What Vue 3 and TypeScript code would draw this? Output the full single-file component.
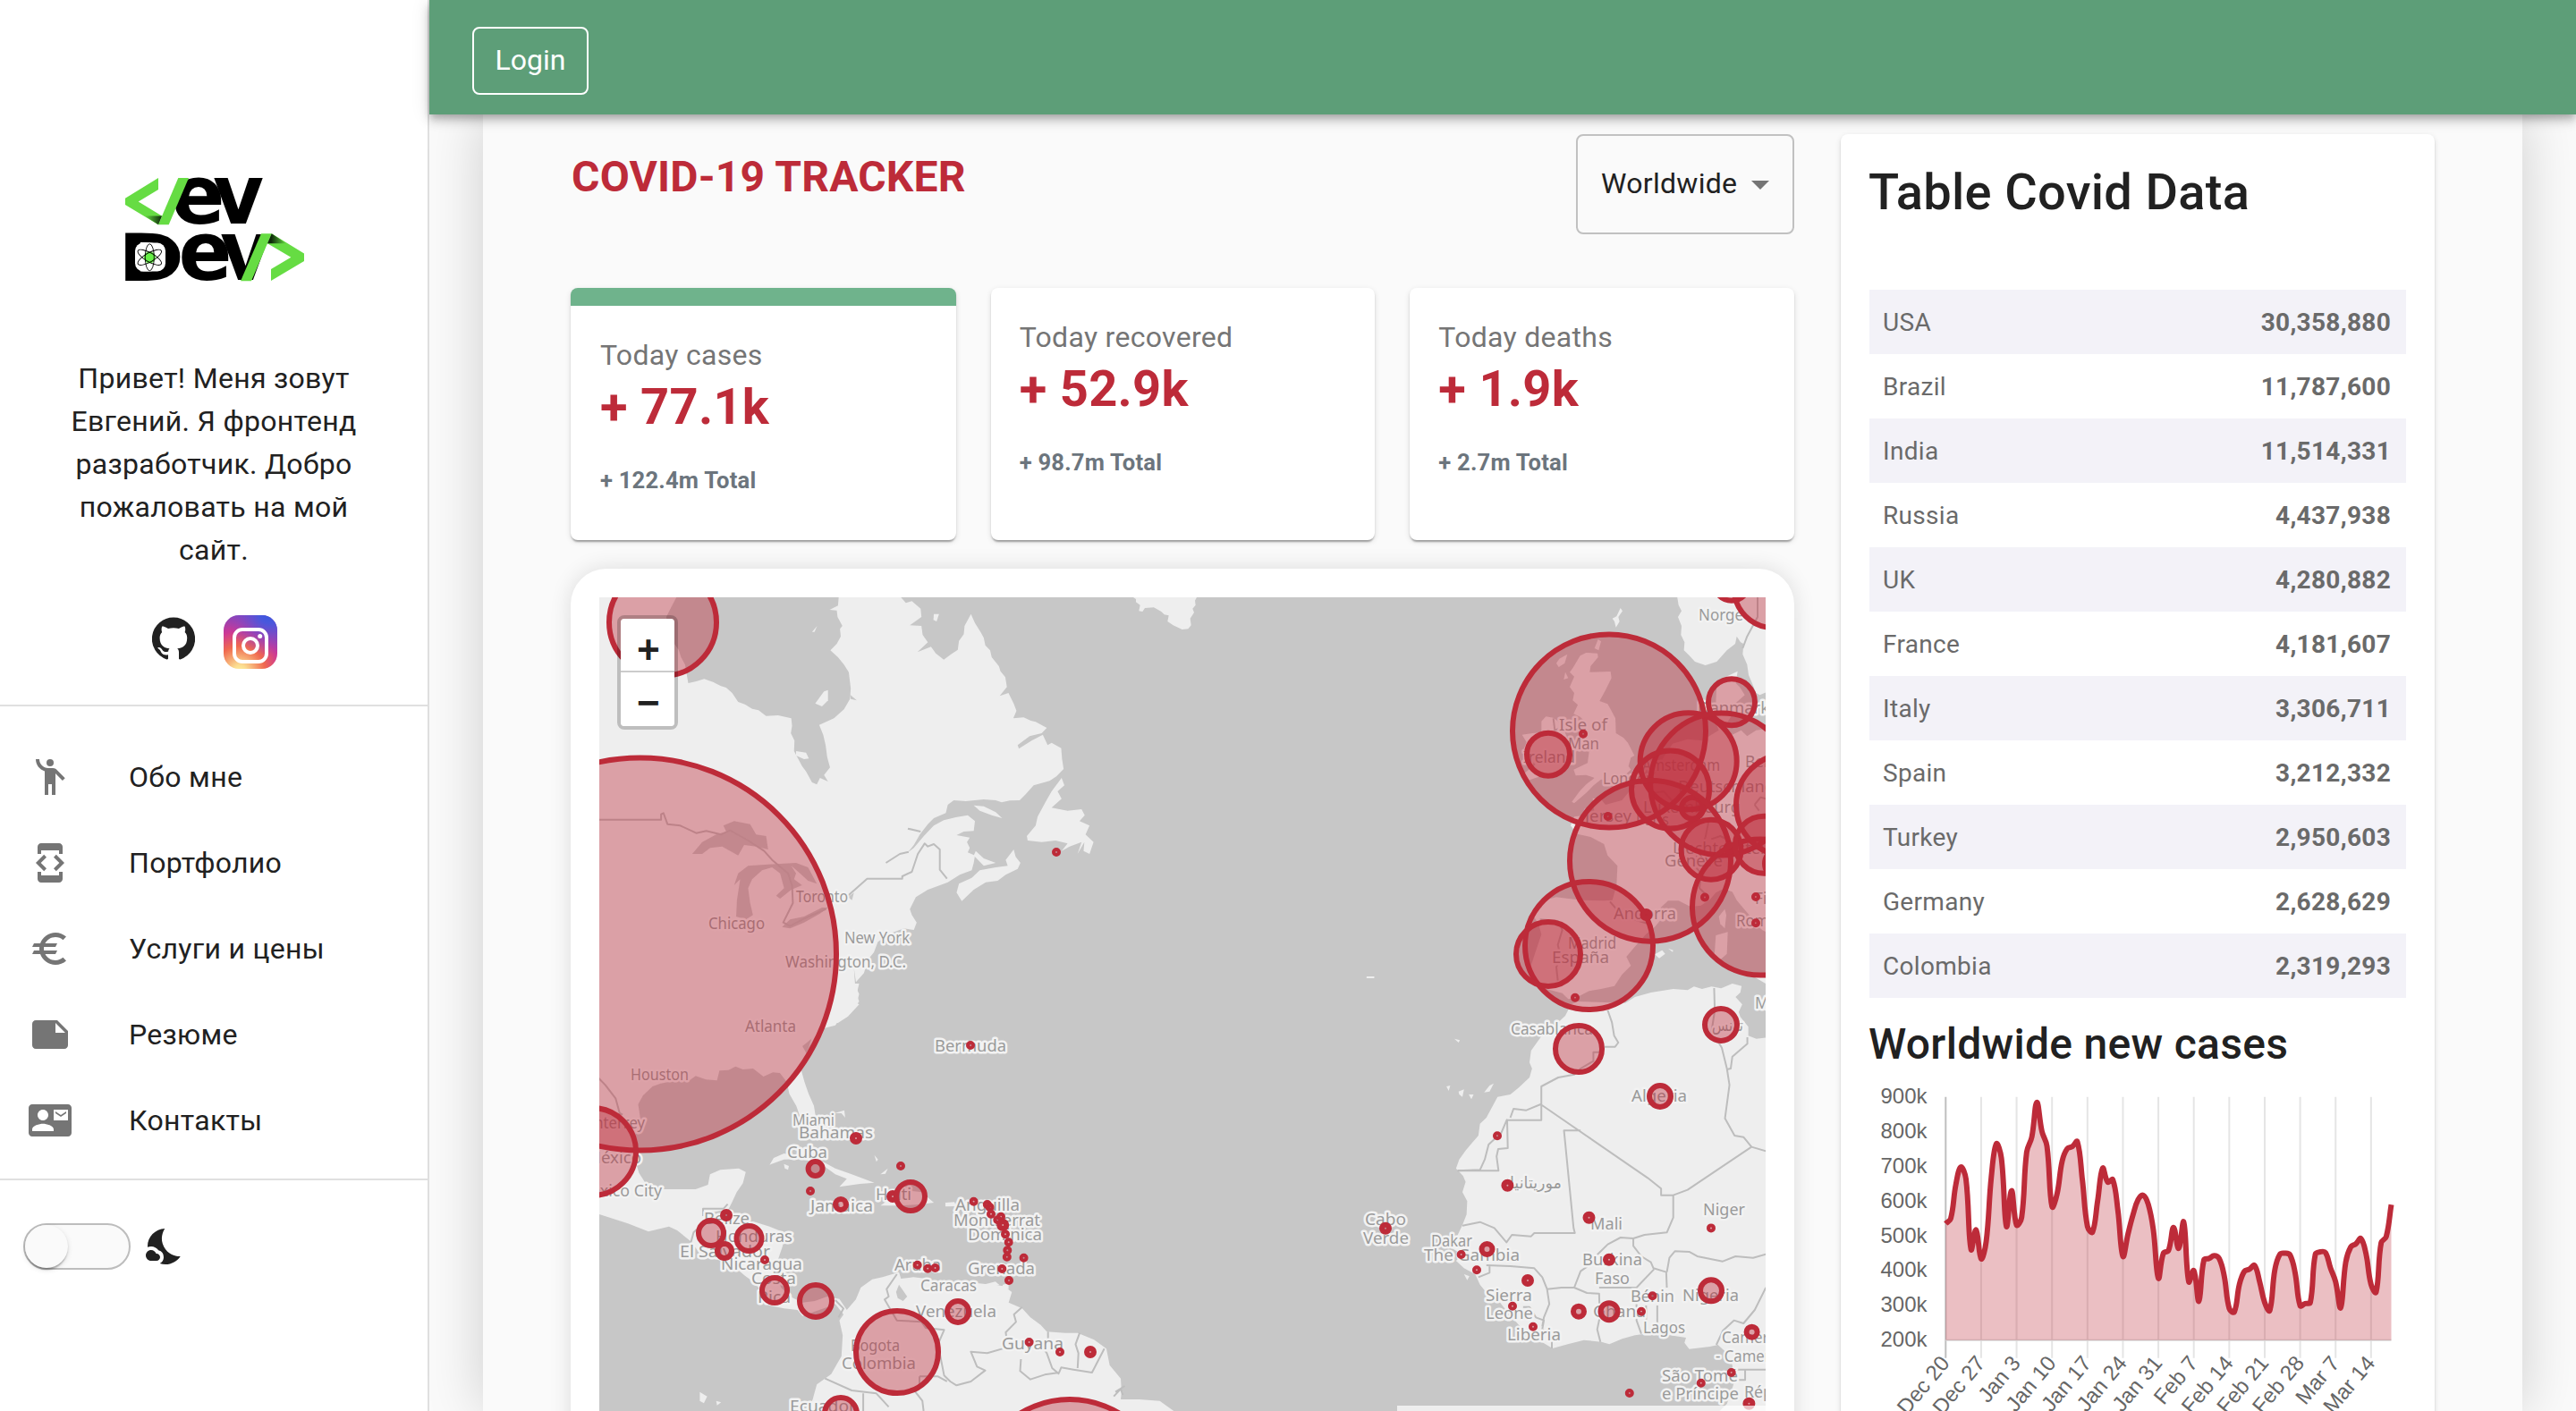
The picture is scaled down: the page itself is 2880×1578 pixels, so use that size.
<script setup lang="ts">
interface NavItem { label: string; paths: string[]; dot?: boolean }
interface Sheet { transform: string; land: string[]; water: string[]; borders: string[] }
type Label = [text: string, left: number, right: number, baseline: number]
type Marker = [x: number, y: number, r: number]

const intro = 'Привет! Меня зовут Евгений. Я фронтенд разработчик. Добро пожаловать на мой сайт.'

const nav: NavItem[] = [
  { label: 'Обо мне', dot: true, paths: ['M15.89 8.11C15.5 7.72 14.83 7 13.53 7h-2.54C8.24 6.99 6 4.75 6 2H4c0 3.16 2.11 5.84 5 6.71V22h2v-6h2v6h2V10.05L18.95 14l1.41-1.41-4.47-4.48z'] },
  { label: 'Портфолио', paths: ['M7 5h10v2h2V3c0-1.1-.9-1.99-2-1.99L7 1c-1.1 0-2 .9-2 2v4h2V5zm8.41 11.59L20 12l-4.59-4.59L14 8.83 17.17 12 14 15.17l1.41 1.42zM10 15.17L6.83 12 10 8.83 8.59 7.41 4 12l4.59 4.59L10 15.17zM17 19H7v-2H5v4c0 1.1.9 2 2 2h10c1.1 0 2-.9 2-2v-4h-2v2z'] },
  { label: 'Услуги и цены', paths: ['M15 18.5c-2.51 0-4.68-1.42-5.76-3.5H15l1-2H8.58c-.05-.33-.08-.66-.08-1s.03-.67.08-1H15l1-2H9.24C10.32 6.92 12.5 5.5 15 5.5c1.61 0 3.09.59 4.23 1.57L21 5.3C19.41 3.87 17.3 3 15 3c-3.92 0-7.24 2.51-8.48 6H3l-1 2h4.06c-.04.33-.06.66-.06 1s.02.67.06 1H3l-1 2h4.52c1.24 3.49 4.56 6 8.48 6 2.31 0 4.41-.87 6-2.3l-1.78-1.77c-1.13.98-2.6 1.57-4.22 1.57z'] },
  { label: 'Резюме', paths: ['M22 10l-6-6H4c-1.1 0-2 .9-2 2v12.01c0 1.1.9 1.99 2 1.99l16-.01c1.1 0 2-.89 2-1.99v-8zm-7-4.5l5.5 5.5H15V5.5z'] },
  { label: 'Контакты', paths: ['M21 8V7l-3 2-3-2v1l3 2 3-2zm1-5H2C.9 3 0 3.9 0 5v14c0 1.1.9 2 2 2h20c1.1 0 1.99-.9 1.99-2L24 5c0-1.1-.9-2-2-2zM8 6c1.66 0 3 1.34 3 3s-1.34 3-3 3-3-1.34-3-3 1.34-3 3-3zm6 12H2v-1c0-2 4-3.1 6-3.1s6 1.1 6 3.1v1zm8-6h-8V6h8v6z'] },
]

const stats = [
  { title: 'Today cases', value: '+ 77.1k', total: '+ 122.4m Total', active: true },
  { title: 'Today recovered', value: '+ 52.9k', total: '+ 98.7m Total', active: false },
  { title: 'Today deaths', value: '+ 1.9k', total: '+ 2.7m Total', active: false },
]

const table: [string, string][] = [
  ['USA', '30,358,880'], ['Brazil', '11,787,600'], ['India', '11,514,331'], ['Russia', '4,437,938'],
  ['UK', '4,280,882'], ['France', '4,181,607'], ['Italy', '3,306,711'], ['Spain', '3,212,332'],
  ['Turkey', '2,950,603'], ['Germany', '2,628,629'], ['Colombia', '2,319,293'],
]

/* ---- map ---- */
const sheets: Sheet[] = [
  {
    transform: 'translate(640 640) scale(.44643 .33333)',
    land: [
      'M60 80L262 80 250 110 235 150 240 185 250 230 266 260 272 285 282 310 290 372 310 366 330 358 352 368 372 382 385 387 400 405 415 435 432 443 450 458 466 463 485 482 515 480 548 490 550 515 547 540 556 565 555 600 575 650 585 668 600 705 612 712 620 690 640 702 630 680 645 655 638 620 634 580 628 545 618 512 655 490 680 460 695 425 697 390 692 335 680 310 665 285 646 262 662 240 672 215 670 190 676 180 664 150 662 128 644 126 665 112 667 80 820 80 835 103 850 97 872 122 874 150 845 178 874 180 877 210 890 235 864 268 898 250 910 272 930 293 948 275 965 260 968 230 980 208 982 180 998 140 1008 170 1022 200 1030 220 1034 245 1046 262 1050 285 1068 315 1072 332 1084 352 1088 385 1070 415 1092 405 1105 440 1112 465 1104 490 1130 487 1148 498 1160 502 1188 522 1175 540 1145 550 1115 580 1118 592 1150 565 1178 545 1190 580 1200 572 1224 590 1226 625 1230 660 1212 685 1195 700 1155 715 1135 745 1120 765 1095 766 1075 772 1060 765 1030 762 985 768 955 765 940 780 935 808 905 825 890 845 870 880 855 915 840 940 855 925 880 885 905 850 930 832 960 822 990 815 1008 835 1005 868 980 870 962 882 995 890 988 905 995 925 990 940 1008 950 1005 975 1000 1000 970 1015 940 1040 925 1048 890 1065 860 1090 845 1130 850 1150 862 1175 855 1200 830 1195 800 1210 765 1240 755 1275 740 1300 730 1345 710 1375 705 1330 708 1385 718 1415 712 1445 718 1450 690 1490 665 1512 60 1512z',
      'M1010 935L1030 960 1060 975 1030 985 1005 950z',
      'M1105 930L1110 955 1122 975 1115 995 1085 1015 1065 1035 1035 1040 1005 1065 975 1103 962 1075 968 1045 1000 1025 1020 1000 1060 990 1090 985 1085 965z',
      'M1005 782L1030 785 1060 805 1076 825 1050 815 1020 800z',
      'M1225 690L1232 715 1215 735 1225 760 1200 790 1240 800 1275 795 1283 815 1270 835 1295 850 1285 880 1305 905 1295 945 1280 935 1282 905 1265 945 1275 905 1245 920 1225 935 1240 910 1210 900 1175 905 1140 900 1138 885 1160 850 1165 820 1185 770 1200 735z',
      'M560 600L585 605 592 625 580 627 560 615z',
      'M630 400L640 395 640 430 625 450 608 440z',
      'M905 140L918 140 912 165 904 160z',
      'M600 200L613 180 606 200z',
    ],
    water: [
      'M300 945L325 905 360 880 385 870 378 850 405 835 445 845 460 880 485 885 490 930 460 920 430 915 415 950 395 935 375 920 345 925 325 945z',
      'M405 1050L415 1010 440 985 490 980 560 975 590 990 612 1045 590 1035 570 1010 548 985 560 1010 555 1030 575 1050 548 1065 520 1095 510 1085 530 1060 520 1010 500 990 475 1000 450 1030 440 1060 445 1110 452 1150 435 1165 410 1155 412 1100 420 1030z',
      'M525 1190L545 1165 580 1155 625 1125 640 1125 620 1145 580 1175 545 1195z',
      'M690 1090L705 1075 700 1100z',
      'M695 410L712 430 697 425z',
    ],
    borders: ['M60 830H222V812L228 808 238 845 270 850 310 875 335 868 372 880 395 866 440 900 480 935 500 965 540 1010 550 1050 552 1110 528 1175 545 1187 580 1162 635 1130', 'M690 1085L738 1028H826V1020L850 1005 865 945 882 910 890 920 905 912 920 930V998L938 1028', 'M785 975L820 945 842 938M840 860L872 870'],
  },
  {
    transform: 'translate(640 1100) scale(.45918 .33333)',
    land: [
      'M60 0L698 0 692 35 698 60 685 85 670 110 650 120 640 140 612 150 590 180 575 215 565 255 557 290 565 330 575 370 588 410 592 445 580 475 555 450 545 410 528 370 522 330 505 300 488 298 465 312 440 285 415 288 397 278 380 290 358 292 352 325 325 322 300 310 285 325 255 325 215 335 195 345 172 375 160 405 165 450 152 510 148 570 162 635 178 670 205 690 250 690 300 690 330 675 335 640 360 625 405 620 422 632 415 670 400 700 388 735 375 770 365 795 400 800 440 798 480 815 515 835 512 880 502 920 495 970 508 1020 530 1050 560 1070 590 1065 620 1050 650 1058 668 1095 690 1060 702 1020 730 992 755 985 795 968 800 990 830 985 862 990 885 1005 930 1010 985 1005 1020 1010 1050 1015 1070 1035 1062 1070 1095 1090 1115 1120 1140 1145 1155 1168 1200 1172 1230 1172 1270 1195 1300 1225 1308 1280 1335 1325 1337 1370 1335 1395 1380 1395 1430 1400 1470 1440 570 1440 585 1395 595 1345 630 1310 655 1250 658 1180 650 1130 660 1110 640 1075 615 1088 590 1100 560 1115 548 1095 515 1090 480 1080 460 1050 450 1010 420 980 390 945 350 925 310 905 288 865 255 828 235 815 185 832 135 805 60 772z',
      'M480 608L490 585 515 570 550 578 600 590 640 620 680 640 735 668 700 672 650 682 668 655 640 640 610 610 560 588 515 590 485 605z',
      'M740 700L790 690 850 700 880 735 850 740 800 745 750 745 770 725z', 'M908 735L930 733 935 747 908 748z', 'M585 735L620 738 650 755 610 755z',
      'M515 605L527 612 525 625 517 620z', 'M1000 1010L1030 1000 1040 1012 1010 1020z', 'M1048 1010L1062 1005 1062 1025 1045 1025z',
      'M310 1370L328 1385 320 1408 310 1400z', 'M350 1400L362 1405 352 1415z', 'M750 640L768 620 762 638z', 'M638 435L662 425 664 450 655 435z', 'M735 575L744 590 740 598z',
    ],
    water: ['M795 1010L805 1030 815 1050 805 1065 792 1055 788 1035z', 'M338 768L385 755 378 768 345 780z', 'M560 210L582 185 570 235z'],
    borders: ['M60 312L80 340 105 385 115 435 122 440', 'M318 780V755H368L378 740M288 870L295 835 310 815', 'M790 975L765 1025 770 1050 760 1060 790 1130 850 1135 860 1155 905 1162 890 1210 900 1280 905 1315 920 1335 935 1348 970 1335 1005 1298 985 1285 970 1235 1010 1240 1060 1220 1055 1170 1080 1135 1075 1110 1095 1085', 'M845 1318H890L912 1335M845 1318V1350L835 1370 852 1400 855 1434', 'M615 1325L680 1365 740 1375 770 1420M708 1375V1434', 'M1158 1168V1200L1145 1220 1155 1240 1168 1290 1185 1310M1235 1172L1225 1210 1232 1240 1230 1290M1092 1260L1090 1300 1115 1328 1150 1312 1185 1305 1190 1288 1220 1295 1265 1305 1295 1225', 'M640 1062L660 1090 648 1120', 'M1322 1370L1345 1350M1318 1385L1335 1360 1340 1380'],
  },
  {
    transform: 'translate(1560 640) scale(.33333)',
    land: [
      'M945 80L950 110 960 130 948 150 960 180 958 210 970 235 968 262 985 278 1005 300 1040 312 1078 300 1100 275 1112 262 1140 240 1145 215 1158 235 1168 240 1165 275 1180 310 1185 345 1200 380 1210 405 1222 412 1250 400 1250 80z',
      'M755 120L762 130 748 150 752 165 740 185 735 165 728 155 742 148z', 'M680 225L690 232 682 262 668 255z',
      'M620 280L640 270 678 272 680 285 655 315 652 335 722 333 725 355 705 395 685 432 712 442 725 465 738 490 740 540 765 555 780 572 802 615 790 622 782 650 790 662 760 690 720 700 690 695 665 715 640 740 600 775 592 770 618 735 640 712 668 690 640 680 605 682 598 662 645 640 650 600 645 588 620 582 640 545 640 505 620 485 598 475 612 445 595 430 600 405 585 385 600 350 585 335 595 322z',
      'M550 290L577 275 568 305 548 318 540 305z', 'M570 335L580 355 565 360z',
      'M490 500L505 484 530 488 552 505 570 540 590 585 588 630 575 655 545 668 500 680 450 697 425 680 470 645 428 600 440 570 425 545 460 540 490 538z',
      'M1078 375L1110 350 1148 332 1142 372 1155 385 1172 412 1140 440 1128 480 1110 510 1105 535 1130 545 1160 530 1180 550 1210 530 1250 525 1250 1210 1230 1200 1200 1165 1170 1130 1145 1100 1130 1072 1100 1062 1075 1075 1055 1098 1025 1118 990 1122 950 1102 915 1102 890 1125 895 1160 870 1190 840 1215 800 1260 775 1290 790 1320 760 1350 735 1388 690 1398 650 1405 605 1428 580 1432 560 1412 520 1402 465 1385 450 1335 468 1280 490 1215 480 1180 455 1140 490 1125 500 1100 540 1090 580 1095 630 1100 700 1102 728 1100 742 1050 745 985 712 950 700 912 655 888 610 878 588 850 600 820 640 815 672 822 665 790 662 758 690 762 705 780 760 765 785 735 830 700 850 695 880 665 900 620 930 575 980 560 1030 565 1060 545 1085 530 1065 480 1075 440z',
      'M1105 1130L1110 1150 1105 1195 1090 1180 1085 1155z', 'M1075 1218L1115 1207 1112 1280 1090 1300 1070 1290z', 'M870 1282L895 1268 905 1280 885 1295z', 'M915 1262L932 1268 930 1274z', 'M1205 1358L1250 1360 1250 1385z',
    ],
    water: [],
    borders: ['M1215 84V150L1180 215 1165 255', 'M720 1105L750 1140 800 1165 850 1180', 'M485 1165L545 1170 560 1200 545 1250 555 1290 540 1325 545 1370', 'M530 490L535 530 560 520', 'M830 700L870 740 900 735 950 790 1000 800 1050 840 1040 890', 'M1040 890L1020 930 1000 980 1025 1010 1020 1060 1040 1080M1060 895L1090 885 1120 900 1180 940 1242 950M1205 780L1225 755 1242 760M1205 780L1220 800'],
  },
  {
    transform: 'translate(1460 1080) scale(.35714 .33333)',
    land: [
      'M830 130L850 120 1000 125 1030 105 1080 90 1150 78 1195 82 1215 70 1240 78 1270 70 1300 76 1335 60 1364 68 1360 90 1345 105 1366 130 1355 155 1360 172 1385 205 1385 235 1410 245 1450 240 1450 1500 1290 1500 1318 1470 1328 1440 1340 1400 1335 1340 1318 1300 1290 1272 1265 1278 1200 1286 1185 1265 1190 1248 1140 1240 1080 1232 1030 1240 990 1252 950 1270 925 1262 870 1256 820 1270 772 1284 720 1250 670 1210 630 1160 600 1120 575 1110 545 1070 530 1035 495 1015 470 990 490 970 445 940 470 915 490 870 503 835 505 790 490 760 500 725 492 705 470 680 480 650 500 620 520 595 540 570 545 530 565 510 580 480 600 440 640 432 665 410 700 375 708 345 700 325 705 285 725 255 745 225 790 190 812 168z',
      'M440 405L452 402 447 420z', 'M478 422L495 415 490 440 480 432z', 'M510 432L525 432 518 448z', 'M558 425L575 402 588 395 575 422z', 'M465 245L482 250 478 258z', 'M190 36H214V42H190z', 'M495 1035L512 1042 505 1055z',
    ],
    water: [],
    borders: [
      'M945 150L958 190 965 235 978 258 968 272H935M920 290H900V320L860 345 840 365 790 375 737 405V518H630L632 612 602 615 597 640 603 688H475M640 510L650 480 690 485 735 465M735 465L1070 712 1112 748V770H1150L1195 752 1395 608 1440 622M860 553H808L838 880 842 897H715L705 908 645 903 628 928 590 880 545 860 490 872',
      'M630 515L612 560 572 600 560 650 545 685 475 688',
      'M1278 75L1280 150 1270 220 1302 275 1318 345 1326 400 1312 512 1342 570 1370 575 1395 608M1382 240V262L1335 305 1330 345 1318 348M1150 770V845L1130 895 1060 903 1025 915 985 912 945 935 912 970M1025 915V940L1050 975 1080 995 1088 1015 1128 1028 1130 1080M1130 1028L1138 980 1155 958 1200 960 1225 975 1305 992 1345 975 1400 980 1440 968',
      'M565 1005L640 1008 715 1015 740 1045 755 1085 800 1080 840 1080 860 1025 880 1010M755 1085L762 1135 745 1180 740 1210M840 1080L880 1098 918 1100 920 1180 912 1220 922 1262M918 1080H1035L1090 1018M1035 1080V1190L1050 1235M1100 1140V1200M1065 1140V1190M575 1005V1030L540 1045M680 1145L700 1145 720 1180 745 1190 740 1220 770 1245V1284',
      'M1440 1080L1405 1155 1370 1200 1340 1190 1305 1225 1285 1272M1345 1355H1440M1375 1355V1390H1345',
    ],
  },
  {
    transform: 'translate(1240 660) scale(.33333)',
    land: ['M75 20L90 30 90 40 104 50 100 70 112 72 120 60 150 58 175 72 185 82 200 85 196 105 215 118 245 132 265 130 275 118 272 95 285 75 280 62 290 50 288 35 296 20z'],
    water: [],
    borders: [],
  },
]

const labels: Label[] = [
  ['Toronto', 890, 948, 1009], ['Chicago', 792, 855, 1039], ['New York', 944, 1017, 1055], ['Washington, D.C.', 878, 1013, 1082],
  ['Atlanta', 833, 890, 1154], ['Houston', 705, 770, 1208], ['Bermuda', 1045, 1125, 1176], ['Miami', 886, 933, 1259],
  ['Bahamas', 893, 976, 1273], ['Cuba', 880, 925, 1295], ['Haiti', 979, 1019, 1342], ['Jamaica', 906, 976, 1355],
  ['Belize', 787, 838, 1369], ['Honduras', 800, 886, 1389], ['El Salvador', 760, 861, 1406], ['Nicaragua', 806, 897, 1420],
  ['Costa', 840, 890, 1436], ['Rica', 847, 884, 1457], ['Aruba', 1000, 1052, 1421], ['Grenada', 1082, 1157, 1425],
  ['Anguilla', 1068, 1140, 1354], ['Montserrat', 1066, 1163, 1371], ['Dominica', 1082, 1165, 1387], ['Caracas', 1029, 1092, 1444],
  ['Venezuela', 1024, 1114, 1473], ['Bogota', 951, 1006, 1511], ['Colombia', 941, 1024, 1531], ['Guyana', 1120, 1189, 1509],
  ['Ecuador', 883, 957, 1579], ['Monterrey', 639, 721, 1262], ['México', 655, 717, 1301], ['Mexico City', 645, 740, 1338],
  ['Norge', 1899, 1949, 694], ['Isle of', 1743, 1797, 817], ['Man', 1753, 1788, 838], ['Ireland', 1703, 1761, 853],
  ['London', 1792, 1850, 877], ['Amsterdam', 1836, 1923, 862], ['Danmark', 1898, 1978, 798], ['Berlin', 1951, 1999, 858],
  ['Deutschland', 1876, 1984, 886], ['Luxembourg', 1837, 1946, 909], ['Jersey', 1772, 1824, 919], ['Paris', 1829, 1866, 923],
  ['Liechtenstein', 1870, 1984, 955], ['Genève', 1861, 1926, 969], ['Andorra', 1804, 1874, 1028], ['Madrid', 1753, 1807, 1061],
  ['España', 1735, 1799, 1077], ['Roma', 1941, 1987, 1036], ['Firenze', 1962, 2020, 1011], ['Malta', 1962, 2008, 1128],
  ['Casablanca', 1689, 1781, 1157], ['تونس', 1914, 1949, 1153], ['Algeria', 1824, 1886, 1232], ['موريتانيا', 1688, 1746, 1329],
  ['Mali', 1778, 1814, 1375], ['Niger', 1904, 1951, 1359], ['Cabo', 1526, 1572, 1370], ['Verde', 1524, 1575, 1391],
  ['Dakar', 1600, 1646, 1394], ['The Gambia', 1592, 1699, 1410], ['Burkina', 1769, 1836, 1415], ['Faso', 1783, 1822, 1436],
  ['Sierra', 1661, 1713, 1455], ['Leone', 1661, 1714, 1475], ['Liberia', 1685, 1745, 1499], ['Bénin', 1823, 1872, 1456],
  ['Nigeria', 1881, 1944, 1455], ['Ghana', 1781, 1840, 1473], ['Lagos', 1837, 1884, 1491], ['Cameroon', 1925, 2008, 1502],
  ['- Cameroun', 1918, 2010, 1523], ['São Tomé', 1858, 1943, 1545], ['e Príncipe', 1858, 1944, 1565], ['République', 1950, 2045, 1563],
]

const markers: Marker[] = [
  [741, 696, 60], [715.5, 1067, 219.5], [1181, 953, 2], [662, 1288, 49], [957, 1273, 4], [911.6, 1307, 8], [906, 1332, 2],
  [940, 1347, 6], [1007, 1304, 2], [998, 1338, 4], [1018, 1338, 16], [812, 1359, 4], [795, 1379, 14], [837.5, 1385, 14],
  [810, 1399, 8], [855, 1409, 2], [866, 1443, 14], [912, 1455, 18], [1003, 1512, 46], [940, 1581, 18], [1071, 1467, 12],
  [1196, 1671, 106], [1150.6, 1501, 2], [1185, 1512, 2], [1219, 1512, 4],
  [1088.6, 1343.7, 2], [1103.8, 1347, 2], [1106.5, 1350, 2], [1108, 1357.7, 2], [1119, 1360.7, 2], [1115.3, 1364.3, 2], [1121.2, 1370, 4],
  [1124, 1380.3, 2], [1127.7, 1389.3, 2], [1126.3, 1398.3, 2], [1125.8, 1405.7, 2], [1144.6, 1406.7, 2], [1120.3, 1419, 2],
  [1128, 1432, 2], [1025.7, 1414.7, 2], [1037.2, 1418.7, 2], [1045.5, 1418, 2], [1085, 1169, 2],
  [1799, 817.5, 108], [1770, 820.7, 2], [1731, 843.7, 24], [1797.7, 913, 2], [1936, 785.3, 26], [1887.7, 851.3, 54],
  [1924.7, 877, 79.5], [1867.5, 883, 43.5], [1892, 903.7, 12], [1845, 962.7, 90], [1913, 950.3, 33.5], [1933.5, 948.5, 4],
  [1776.5, 1057.5, 71.5], [1731, 1067, 36], [1761, 1115.7, 2], [1840.4, 1023, 4], [1906, 1003.5, 2], [1963, 1003, 2], [1963, 1032.3, 2],
  [1968, 1014.6, 76], [1998, 900.3, 57], [1972, 944.7, 32], [1990, 966, 17], [1936, 651.7, 20], [1982.7, 658, 44],
  [1765, 1173, 26], [1924, 1146, 18], [1856, 1226, 12], [1674, 1270.3, 2], [1685.4, 1325.7, 4], [1776.5, 1361.7, 4], [1913, 1373.4, 2],
  [1549, 1373.7, 4], [1662.5, 1397, 6], [1633.6, 1403, 2], [1651, 1420.3, 2], [1708, 1432, 4], [1691, 1460.7, 2], [1714, 1483.7, 2],
  [1799, 1408.7, 4], [1765, 1466.7, 6], [1799, 1466.7, 9.5], [1847.5, 1449.3, 2], [1835, 1466.7, 2], [1913, 1443.3, 12],
  [1958.6, 1489.7, 6], [1935.7, 1535, 2], [1901.8, 1546.7, 2], [1821.8, 1558, 2], [1955.4, 1569.7, 4],
]

/* ---- chart: daily new cases, thousands ---- */
const daily = [
  535, 550, 647, 698, 664, 461, 517, 434, 484, 668, 765, 724, 527, 630, 531, 553, 741, 784, 884, 801, 758, 584, 621, 715, 751, 757,
  771, 660, 527, 511, 600, 695, 655, 662, 574, 441, 505, 561, 604, 617, 591, 518, 378, 450, 458, 524, 464, 540, 368, 400, 312, 431,
  435, 443, 435, 385, 291, 281, 360, 398, 404, 415, 368, 308, 285, 402, 447, 450, 445, 394, 299, 305, 308, 447, 454, 452, 407, 368,
  293, 424, 468, 477, 492, 449, 360, 338, 480, 498, 590,
]
const left = 2175.3
const right = 2673.5
const top = 1226.7
const bottom = 1498.7
const step = (right - left) / (daily.length - 1)
const px = (i: number) => left + i * step
const py = (v: number) => bottom - ((v - 200) / 700) * (bottom - top)

/* Cardinal spline with tension .4, control points scaled by neighbour distance */
function spline(values: number[]): string {
  const pts = values.map((v, i) => ({ x: px(i), y: py(v) }))
  const ctrl = pts.map((p, i) => {
    const a = pts[Math.max(0, i - 1)]
    const b = pts[Math.min(pts.length - 1, i + 1)]
    const d1 = Math.hypot(p.x - a.x, p.y - a.y)
    const d2 = Math.hypot(b.x - p.x, b.y - p.y)
    const f1 = (0.4 * d1) / (d1 + d2)
    const f2 = (0.4 * d2) / (d1 + d2)
    return { ax: p.x - f1 * (b.x - a.x), ay: p.y - f1 * (b.y - a.y), bx: p.x + f2 * (b.x - a.x), by: p.y + f2 * (b.y - a.y) }
  })
  let d = `M${pts[0].x} ${pts[0].y}`
  for (let i = 1; i < pts.length; i++) {
    d += `C${ctrl[i - 1].bx} ${ctrl[i - 1].by} ${ctrl[i].ax} ${ctrl[i].ay} ${pts[i].x} ${pts[i].y}`
  }
  return d
}
const line = spline(daily)
const area = `${line}L${right} ${bottom}L${left} ${bottom}Z`
const weeks = ['Dec 20', 'Dec 27', 'Jan 3', 'Jan 10', 'Jan 17', 'Jan 24', 'Jan 31', 'Feb 7', 'Feb 14', 'Feb 21', 'Feb 28', 'Mar 7', 'Mar 14']
const levels = [900, 800, 700, 600, 500, 400, 300, 200]
</script>

<template>
  <div class="page">
    <aside class="sidebar">
      <svg class="logo" viewBox="0 0 200 116">
        <defs>
          <linearGradient id="foldA" x1="0" x2="1"><stop offset="0" stop-color="#66dc43" /><stop offset="1" stop-color="#0d2a08" /></linearGradient>
          <linearGradient id="foldB" x1="0" x2="1"><stop offset="0.2" stop-color="#0d2a08" /><stop offset="1" stop-color="#66dc43" /></linearGradient>
        </defs>
        <g class="logo-word">
          <text x="51.5" y="51" font-size="90" textLength="60" lengthAdjust="spacingAndGlyphs">e</text>
          <text x="98" y="51" font-size="93" textLength="57" lengthAdjust="spacingAndGlyphs">v</text>
          <text x="-8" y="115.3" font-size="72.5" textLength="74" lengthAdjust="spacingAndGlyphs">D</text>
          <text x="59.5" y="114.3" font-size="90" textLength="60" lengthAdjust="spacingAndGlyphs">e</text>
          <text x="106" y="114.3" font-size="93" textLength="57" lengthAdjust="spacingAndGlyphs">v</text>
        </g>
        <g fill="#66dc43">
          <path d="M37 0L0 22.7V30L37 52.2 41 42.5 14.7 26.5 37 13z" />
          <path d="M59.3 0H71L48.7 52.2H37z" />
          <path d="M152 62.3H163.7L141 115.3H129z" />
          <path d="M163.7 62.3L200 84.6V93L163 115V101.9L185.3 88.8 159 73.2z" />
        </g>
        <path d="M22 42.5H41L37 52.2z" fill="url(#foldA)" />
        <path d="M163.7 62.3L180 73.2H159z" fill="url(#foldB)" />
        <rect x="11" y="72.5" width="34" height="32" rx="9" fill="#fff" />
        <circle cx="27.3" cy="88.8" r="6.6" fill="#66f046" />
        <g fill="none" stroke="#000" stroke-width=".9">
          <ellipse cx="27.3" cy="88.8" rx="5" ry="15" />
          <ellipse cx="27.3" cy="88.8" rx="5" ry="15" transform="rotate(60 27.3 88.8)" />
          <ellipse cx="27.3" cy="88.8" rx="5" ry="15" transform="rotate(-60 27.3 88.8)" />
        </g>
      </svg>
      <p class="intro">{{ intro }}</p>
      <div class="social">
        <svg class="github" viewBox="0 0 24 24"><path d="M12 .3a12 12 0 0 0-3.8 23.4c.6.1.8-.3.8-.6v-2c-3.3.7-4-1.6-4-1.6-.6-1.4-1.4-1.8-1.4-1.8-1-.7.1-.7.1-.7 1.2 0 1.9 1.2 1.9 1.2 1 1.8 2.8 1.3 3.5 1 0-.8.4-1.3.7-1.6-2.7-.3-5.5-1.3-5.5-6 0-1.2.5-2.3 1.3-3.1-.2-.4-.6-1.6 0-3.2 0 0 1-.3 3.4 1.2a11.5 11.5 0 0 1 6 0c2.3-1.5 3.3-1.2 3.3-1.2.6 1.6.2 2.8 0 3.2.9.8 1.3 1.9 1.3 3.2 0 4.6-2.8 5.6-5.5 5.9.5.4.9 1 .9 2.2v3.3c0 .3.1.7.8.6A12 12 0 0 0 12 .3" /></svg>
        <svg class="instagram" viewBox="0 0 60 60">
          <defs>
            <radialGradient id="igWarm" cx=".3" cy="1.05" r="1.05">
              <stop offset="0" stop-color="#fff09c" /><stop offset=".12" stop-color="#fbdc90" /><stop offset=".45" stop-color="#f0694f" /><stop offset=".72" stop-color="#cd3895" /><stop offset="1" stop-color="#8a44b8" />
            </radialGradient>
            <radialGradient id="igCool" cx=".85" cy="-.05" r=".8">
              <stop offset="0" stop-color="#3558e0" /><stop offset=".25" stop-color="#4a57dc" /><stop offset="1" stop-color="#8a44c8" stop-opacity="0" />
            </radialGradient>
          </defs>
          <rect width="60" height="60" rx="17" fill="url(#igWarm)" />
          <rect width="60" height="60" rx="17" fill="url(#igCool)" />
          <rect x="12" y="16" width="36" height="36" rx="9" fill="none" stroke="#fff" stroke-width="4" />
          <circle cx="30" cy="34" r="8" fill="none" stroke="#fff" stroke-width="4" />
          <circle cx="40.7" cy="23.4" r="2.5" fill="#fff" />
        </svg>
      </div>
      <nav class="nav">
        <a v-for="item in nav" :key="item.label" class="nav-item">
          <svg viewBox="0 0 24 24"><circle v-if="item.dot" cx="12" cy="4" r="2" /><path v-for="p in item.paths" :key="p" :d="p" /></svg>
          <span>{{ item.label }}</span>
        </a>
      </nav>
      <div class="theme">
        <div class="switch"><div class="thumb" /></div>
        <svg viewBox="0 0 24 24"><path d="M11.1 12.08c-2.33-4.51-.5-8.48.53-10.07C6.27 2.2 1.98 6.59 1.98 12c0 .14.02.28.02.42.62-.27 1.29-.42 2-.42 1.66 0 3.18.83 4.1 2.15A4.01 4.01 0 0 1 11 18c0 1.52-.87 2.83-2.12 3.51.98.32 2.03.5 3.11.5 3.5 0 6.58-1.8 8.37-4.52-2.36.23-6.98-.97-9.26-5.41z" /><path d="M7 16h-.18C6.4 14.84 5.3 14 4 14c-1.66 0-3 1.34-3 3s1.34 3 3 3h3c1.1 0 2-.9 2-2s-.9-2-2-2z" /></svg>
      </div>
    </aside>

    <div class="main">
      <header class="topbar"><button class="login">Login</button></header>
      <main class="content">
        <section class="left">
          <div class="heading">
            <h1>COVID-19 TRACKER</h1>
            <div class="select"><span>Worldwide</span><i class="caret" /></div>
          </div>
          <div class="stats">
            <article v-for="s in stats" :key="s.title" class="stat" :class="{ active: s.active }">
              <h2>{{ s.title }}</h2>
              <strong>{{ s.value }}</strong>
              <p>{{ s.total }}</p>
            </article>
          </div>
          <div class="map-card">
            <div class="map">
              <svg viewBox="670 668 1304 910">
                <rect x="670" y="668" width="1304" height="910" fill="#c7c7c7" />
                <g v-for="(s, i) in sheets" :key="'l' + i" :transform="s.transform">
                  <path v-for="(d, j) in s.land" :key="j" :d="d" class="land" />
                </g>
                <g v-for="(s, i) in sheets" :key="'b' + i" :transform="s.transform">
                  <path v-for="(d, j) in s.water" :key="j" :d="d" class="water" />
                  <path v-for="(d, j) in s.borders" :key="'b' + j" :d="d" class="border" />
                </g>
                <text v-for="l in labels" :key="l[0]" class="place" :x="(l[1] + l[2]) / 2" :y="l[3]" :textLength="l[2] - l[1]" lengthAdjust="spacingAndGlyphs">{{ l[0] }}</text>
                <circle v-for="(m, i) in markers" :key="i" class="marker" :cx="m[0]" :cy="m[1]" :r="m[2]" />
                <rect x="1562" y="1572" width="412" height="6" fill="#fff" fill-opacity=".7" />
              </svg>
              <div class="zoom"><b>+</b><b>−</b></div>
            </div>
          </div>
        </section>

        <section class="right">
          <h2 class="table-title">Table Covid Data</h2>
          <div class="table">
            <div v-for="row in table" :key="row[0]" class="row"><span>{{ row[0] }}</span><b>{{ row[1] }}</b></div>
          </div>
          <h3 class="chart-title">Worldwide new cases</h3>
          <svg class="chart" viewBox="2090 1196 600 400">
            <line v-for="(w, i) in weeks" :key="w" :x1="px(i * 7)" :x2="px(i * 7)" :y1="top" y2="1518.7" :stroke="i ? '#e5e5e5' : '#bfbfbf'" stroke-width="2" />
            <line :x1="left" :x2="right" :y1="bottom" :y2="bottom" stroke="#d9d9d9" stroke-width="2" />
            <path :d="area" fill="#bd2b39" fill-opacity=".3" />
            <path :d="line" fill="none" stroke="#bd2b39" stroke-width="6" stroke-linejoin="bevel" />
            <text v-for="v in levels" :key="v" x="2154.5" :y="py(v) + 7.5" text-anchor="end">{{ v }}k</text>
            <text v-for="(w, i) in weeks" :key="w" text-anchor="end" :transform="`translate(${px(i * 7) - 0.5} 1520) rotate(-50)`" y="8">{{ w }}</text>
          </svg>
        </section>
      </main>
    </div>
  </div>
</template>

<style>
body { margin: 0; overflow: hidden; }
</style>

<style scoped>
.page { display: flex; width: 2880px; height: 1578px; overflow: hidden; background: #fafafa; color: #212121; font-family: Roboto, "Liberation Sans", sans-serif; }
h1, h2, h3, p { margin: 0; }
.sidebar { box-sizing: border-box; width: 480px; flex: none; background: #fff; border-right: 2px solid #e0e0e0; display: flex; flex-direction: column; align-items: center; padding-top: 199px; }
.logo { width: 200px; height: 116px; margin-left: 2px; overflow: visible; flex: none; }
.logo-word text { font-family: "DejaVu Sans", sans-serif; font-weight: 700; fill: #000; }
.intro { box-sizing: border-box; width: 478px; height: 240px; padding: 0 64px; margin-top: 84px; font-size: 32px; line-height: 48px; letter-spacing: .3px; text-align: center; }
.social { display: flex; align-items: flex-start; gap: 32px; height: 100px; margin-top: 49px; margin-left: 2px; }
.github { width: 48px; height: 48px; margin-top: 2px; fill: #212121; }
.instagram { width: 60px; height: 60px; }
.nav { box-sizing: border-box; width: 100%; height: 532px; padding-top: 31px; border-top: 2px solid #e0e0e0; border-bottom: 2px solid #e0e0e0; }
.nav-item { display: flex; align-items: center; gap: 64px; height: 96px; padding-left: 32px; font-size: 32px; letter-spacing: .3px; }
.nav-item svg { width: 48px; height: 48px; fill: #757575; }
.theme { display: flex; align-items: center; gap: 15px; width: 100%; padding: 48px 0 0 26px; box-sizing: border-box; }
.theme > svg { width: 48px; height: 48px; fill: #212121; }
.switch { box-sizing: border-box; width: 120px; height: 52px; border: 2px solid #bdbdbd; border-radius: 26px; background: #fafafa; }
.thumb { width: 48px; height: 48px; border-radius: 50%; background: #fafafa; box-shadow: 0 4px 2px -2px rgba(0,0,0,.2), 0 2px 2px rgba(0,0,0,.14), 0 2px 6px rgba(0,0,0,.12); }

.main { flex: 1; min-width: 0; display: flex; flex-direction: column; }
.topbar { position: relative; z-index: 2; box-sizing: border-box; height: 128px; flex: none; padding: 30px 48px 0; background: #5d9e78; box-shadow: 0 4px 8px -2px rgba(0,0,0,.2), 0 8px 10px rgba(0,0,0,.14), 0 2px 20px rgba(0,0,0,.12); }
.login { display: block; box-sizing: border-box; width: 130px; height: 76px; padding: 0 0 2px; border: 2px solid #fff; border-radius: 8px; background: none; color: #fff; font: 400 32px Roboto, sans-serif; }
.content { box-sizing: border-box; flex: 1; min-height: 0; margin: 0 60px; padding: 22px 98px 0; display: flex; align-items: flex-start; gap: 52px; background: #fafafa; box-shadow: 0 0 60px rgba(0,0,0,.18); }
.left { width: 1368px; flex: none; }
.heading { display: flex; justify-content: space-between; align-items: flex-start; height: 172px; }
.heading h1 { margin-top: 20px; padding-left: 1px; font-size: 48px; line-height: 56px; font-weight: 700; color: #bd2b39; letter-spacing: .22px; }
.select { box-sizing: border-box; width: 244px; height: 112px; border: 2px solid #c1c1c1; border-radius: 8px; display: flex; align-items: center; padding: 0 28px 2px 26px; font-size: 32px; gap: 16px; letter-spacing: .3px; }
.caret { border: 10px solid transparent; border-top-color: #757575; border-bottom: 0; margin-top: 4px; }
.stats { display: flex; gap: 39px; }
.stat { box-sizing: border-box; flex: 1; height: 282px; padding: 32px; background: #fff; border-radius: 8px; box-shadow: 0 4px 2px -2px rgba(0,0,0,.2), 0 2px 2px rgba(0,0,0,.14), 0 2px 6px rgba(0,0,0,.12); }
.stat.active { border-top: 20px solid #6fb38c; padding-left: 33px; }
.stat h2 { font-size: 32px; line-height: 46px; margin-bottom: 2px; font-weight: 400; color: #757575; letter-spacing: .3px; }
.stat strong { display: block; font-size: 56px; line-height: 66px; font-weight: 700; color: #bd2b39; letter-spacing: .3px; }
.stat p { margin-top: 34px; font-size: 25.6px; line-height: 30px; font-weight: 700; color: #6c757d; letter-spacing: .2px; }
.map-card { height: 1000px; margin-top: 32px; padding: 32px; box-sizing: border-box; border-radius: 40px; background: #fff; box-shadow: 0 0 24px rgba(0,0,0,.12); }
.map { position: relative; width: 1304px; height: 910px; }
.map > svg { display: block; width: 100%; height: 100%; }
.land { fill: #eee; }
.water { fill: #c7c7c7; }
.border { fill: none; stroke: #bdbdbd; stroke-width: 2; vector-effect: non-scaling-stroke; stroke-linejoin: round; }
.place { font-family: "Noto Sans", "DejaVu Sans", sans-serif; font-size: 18px; text-anchor: middle; fill: #9a9a9a; stroke: #f2f2f2; stroke-width: 5px; stroke-linejoin: round; paint-order: stroke; }
.marker { fill: #bd2b39; fill-opacity: .4; stroke: #bd2b39; stroke-width: 6; }
.zoom { position: absolute; left: 20px; top: 20px; display: flex; flex-direction: column; border: 4px solid rgba(0,0,0,.2); border-radius: 8px; background-clip: padding-box; }
.zoom b { box-sizing: border-box; width: 60px; height: 60px; padding-left: 2px; background: #fff; font: 700 44px/74px "Liberation Mono", monospace; text-align: center; border-radius: 0 0 4px 4px; }
.zoom b:first-child { line-height: 76px; border-bottom: 2px solid #ccc; border-radius: 4px 4px 0 0; }

.right { box-sizing: border-box; width: 664px; height: 1600px; flex: none; padding: 32px; background: #fff; border-radius: 8px; box-shadow: 0 4px 2px -2px rgba(0,0,0,.2), 0 2px 2px rgba(0,0,0,.14), 0 2px 6px rgba(0,0,0,.12); }
.table-title { margin-left: -1px; font-size: 56px; line-height: 66px; font-weight: 500; letter-spacing: .3px; }
.table { margin-top: 76px; color: #6a6a6a; }
.row { display: flex; align-items: center; justify-content: space-between; height: 72px; padding: 0 17px 0 15px; font-size: 28px; letter-spacing: .3px; }
.row:nth-child(odd) { background: #f3f2f8; }
.row b { font-weight: 700; }
.chart-title { margin: 24px 0 0 -1px; font-size: 48px; line-height: 56px; font-weight: 500; letter-spacing: .3px; white-space: nowrap; }
.chart { display: block; width: 600px; height: 400px; }
.chart text { font-family: "Liberation Sans", Arial, sans-serif; font-size: 24px; fill: #666; }
</style>
